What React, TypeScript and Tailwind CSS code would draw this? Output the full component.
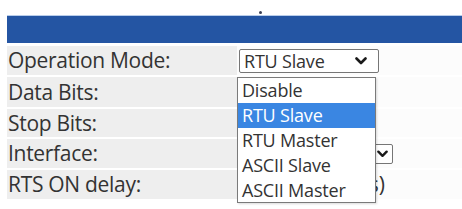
import React from "react";

const font = { fontFamily: '"Open Sans", "Noto Sans", "Liberation Sans", sans-serif' };

function Chevron({ className = "" }: { className?: string }) {
  return (
    <svg viewBox="0 0 12 8" className={className} fill="none">
      <path d="M1.5 1.5 L6 6 L10.5 1.5" stroke="#1a1a1a" strokeWidth="2.6" strokeLinecap="round" strokeLinejoin="round" />
    </svg>
  );
}

const rows = ["Operation Mode:", "Data Bits:", "Stop Bits:", "Interface:", "RTS ON delay:"];
const heights = ["h-[31px]", "h-[32px]", "h-[30px]", "h-[31px]", "h-[31px]"];
const options = ["Disable", "RTU Slave", "RTU Master", "ASCII Slave", "ASCII Master"];

export default function App() {
  return (
    <div className="relative w-[462px] h-[209px] overflow-hidden bg-white font-medium text-[#333333]" style={font}>
      <div className="relative h-[15px]">
        <div className="absolute left-[259px] top-[11px] h-[3px] w-[3px] rounded-full bg-[#3a3f55]" />
      </div>
      <div className="ml-[7px] h-[28px] border-t border-[#b9cdea] bg-[#2455a3]" />
      <div className="ml-[7px] mt-[3px] flex flex-col">
        {rows.map((r, i) => (
          <div key={r} className={`flex ${heights[i]} border-b-2 border-white`}>
            <div className="flex w-[230px] items-center bg-[#eeeeee] pl-[1px] text-[21px] leading-none tracking-[-0.3px]">
              {r}
            </div>
            <div className="flex flex-1 items-center bg-[#fcfcfc] pl-[2px]">
              {i === 0 && (
                <div className="flex h-[24px] w-[140px] items-center justify-between rounded-[2px] border border-[#767676] bg-white pl-[4px] pr-[11px] text-[18px] leading-none tracking-[-0.2px]">
                  <span>RTU Slave</span>
                  <Chevron className="h-[8px] w-[12px]" />
                </div>
              )}
              {i === 3 && (
                <div className="flex h-[20px] w-[154px] items-center justify-end rounded-[2px] border border-[#767676] bg-white pr-[4px] text-[18px]">
                  <Chevron className="h-[8px] w-[11px]" />
                </div>
              )}
              {i === 4 && (
                <div className="flex items-center gap-[4px] text-[21px] leading-none">
                  <div className="h-[22px] w-[100px] border border-[#767676] bg-white" />
                  <span>(ms)</span>
                </div>
              )}
            </div>
          </div>
        ))}
      </div>
      <div className="absolute left-[237px] top-[77px] flex h-[126px] w-[139px] flex-col border border-[#7a7a7a] bg-white text-[18px] leading-none tracking-[-0.2px] shadow-[1px_1px_2px_rgba(0,0,0,0.15)]">
        {options.map((o) => (
          <div
            key={o}
            className={`flex h-[25px] items-center pl-[4px] ${o === "RTU Slave" ? "bg-[#3a86e2] text-white" : ""}`}
          >
            {o}
          </div>
        ))}
      </div>
    </div>
  );
}
